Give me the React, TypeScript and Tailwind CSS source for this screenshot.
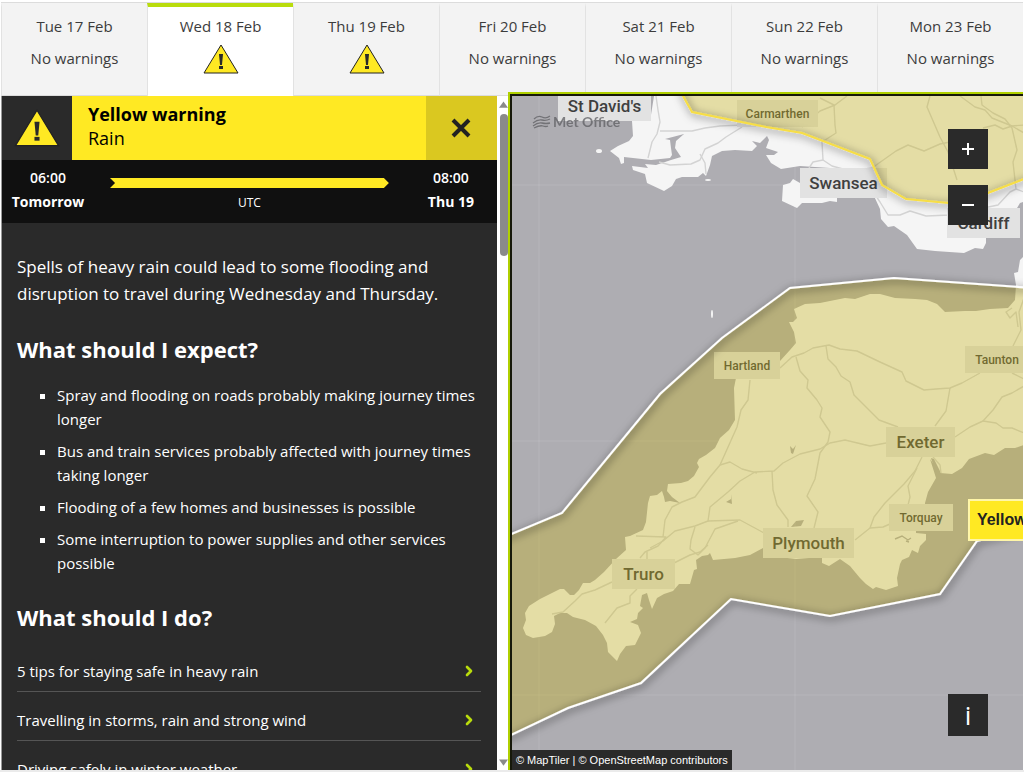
import { FiChevronRight } from 'react-icons/fi'
import clsx from 'clsx'

const DAYS = [
  { date: 'Tue 17 Feb', warning: false },
  { date: 'Wed 18 Feb', warning: true },
  { date: 'Thu 19 Feb', warning: true },
  { date: 'Fri 20 Feb', warning: false },
  { date: 'Sat 21 Feb', warning: false },
  { date: 'Sun 22 Feb', warning: false },
  { date: 'Mon 23 Feb', warning: false }
]

const EXPECT = [
  'Spray and flooding on roads probably making journey times longer',
  'Bus and train services probably affected with journey times taking longer',
  'Flooding of a few homes and businesses is possible',
  'Some interruption to power supplies and other services possible'
]

const LINKS = [
  '5 tips for staying safe in heavy rain',
  'Travelling in storms, rain and strong wind',
  'Driving safely in winter weather'
]

// x, y, width, height of the plate behind each place name
const PLACES = [
  { name: "St David's", x: 558, y: 91, w: 93, h: 30, big: true },
  { name: 'Swansea', x: 800, y: 168, w: 87, h: 30, big: true },
  { name: 'Cardiff', x: 947, y: 208, w: 73, h: 30, big: true },
  { name: 'Exeter', x: 886, y: 427, w: 69, h: 30, big: true },
  { name: 'Plymouth', x: 763, y: 528, w: 91, h: 30, big: true },
  { name: 'Truro', x: 612, y: 559, w: 63, h: 30, big: true },
  { name: 'Carmarthen', x: 737, y: 100, w: 81, h: 27, big: false },
  { name: 'Hartland', x: 714, y: 352, w: 66, h: 27, big: false },
  { name: 'Taunton', x: 965, y: 346, w: 64, h: 27, big: false },
  { name: 'Torquay', x: 889, y: 504, w: 64, h: 27, big: false }
]

const WALES =
  'M655 90 L650 121 L632 121 L633 136 L629 141 L618 146 L610 151 L619 158 L621 164 L624 163 L624 157 L651 160 L670 158 L672 155 L671 148 L670 140 L665 139 L684 134 L676 141 L675 148 L681 157 L671 160 L656 165 L645 164 L648 168 L632 166 L633 170 L645 174 L647 183 L664 191 L672 186 L676 179 L682 177 L698 177 L703 173 L706 176 L710 165 L712 156 L722 151 L735 150 L752 151 L757 146 L752 141 L760 143 L767 136 L769 140 L766 148 L778 152 L774 155 L766 155 L771 163 L781 169 L800 166 L830 168 L830 180 L800 183 L793 179 L790 183 L783 185 L782 201 L797 208 L802 203 L822 203 L830 201 L837 202 L837 190 L874 196 L880 209 L881 219 L888 227 L894 226 L907 235 L917 249 L935 251 L964 253 L975 248 L983 249 L986 243 L986 230 L1003 228 L1014 213 L1020 203 L1030 200 L1030 90 Z'

const SOUTH_WEST =
  'M738 368 L734 388 L735 420 L729 430 L720 438 L715 448 L706 455 L699 459 L697 463 L699 467 L694 476 L688 481 L681 483 L668 484 L667 491 L672 497 L680 503 L670 501 L665 502 L664 497 L662 491 L657 495 L650 496 L648 503 L646 522 L643 530 L630 536 L625 537 L626 550 L616 559 L604 572 L595 580 L590 583 L583 583 L579 590 L574 595 L570 595 L564 589 L560 589 L540 599 L529 606 L525 613 L526 620 L523 628 L526 635 L533 638 L545 636 L552 632 L555 624 L554 616 L560 613 L567 613 L573 617 L585 620 L596 626 L603 635 L607 643 L608 652 L617 661 L620 654 L626 646 L635 645 L641 633 L638 625 L630 622 L637 619 L638 613 L643 608 L640 606 L642 595 L647 593 L649 600 L652 609 L657 598 L664 594 L673 591 L679 584 L690 584 L694 570 L697 569 L696 560 L702 556 L708 555 L710 553 L713 560 L735 558 L750 555 L763 548 L770 556 L796 559 L822 557 L822 563 L829 566 L840 559 L850 566 L860 578 L866 584 L873 589 L876 587 L886 590 L898 586 L897 578 L900 564 L902 560 L909 557 L912 550 L918 553 L920 546 L926 540 L926 534 L916 533 L916 525 L925 520 L925 503 L928 492 L936 478 L930 459 L940 473 L952 474 L962 468 L969 459 L985 453 L994 455 L1005 448 L1015 448 L1030 443 L1030 250 L1020 260 L1018 272 L1014 273 L1016 285 L1015 300 L1008 308 L990 309 L976 311 L965 311 L945 312 L937 304 L927 300 L915 299 L895 298 L880 294 L870 294 L855 299 L845 298 L820 303 L805 304 L794 309 L797 318 L793 322 L789 322 L794 332 L796 343 L790 350 L780 361 L770 366 Z'

const NORTH_ZONE =
  'M670 60 L683 96 L692 112 L766 127 L802 133 L870 159 L882 185 L906 199 L948 203 L988 193 L1024 179 L1060 165 L1060 60 Z'

const SOUTH_ZONE =
  'M490 543 L562 513 L660 394 L722 338 L790 288 L894 278 L1060 290 L1060 520 L977 541 L940 594 L830 616 L731 599 L641 683 L568 708 L490 745 Z'

const ROADS = [
  'M656 96 L658 110 L660 122 L657 134 L652 142 L648 158',
  'M660 131 L683 131 L692 131 L705 128 L720 126 L742 125',
  'M742 127 L726 137 L718 143 L705 149 L700 160 L691 164 L670 165 L659 162',
  'M700 154 L705 163 L706 174',
  'M847 96 L835 105 L820 111 L802 127',
  'M820 98 L834 105 L835 125 L836 133 L822 142 L823 160 L813 162 L809 168',
  'M823 160 L832 166 L850 171 L872 168 L896 151 L908 145 L924 151 L940 144 L960 140',
  'M872 190 L880 202 L888 215 L900 215 L910 211 L926 216 L950 215 L998 205 L1010 192 L1016 189 L1024 192',
  'M930 96 L927 107 L940 137 L948 152 L957 180',
  'M960 96 L975 107 L985 110 L992 118 L1012 126 L1024 133',
  'M981 96 L982 105 L993 113 L1005 119 L1012 128 L1017 150 L1013 162 L1016 189',
  'M983 128 L995 125 L1003 129 L1012 126 L1024 125',
  'M780 368 L792 357 L804 353 L813 348 L829 345 L840 349 L857 351 L880 362 L902 372 L906 381 L924 390 L936 389 L950 388 L962 383 L980 373',
  'M950 388 L946 411 L935 426',
  'M826 346 L828 359 L836 367 L841 376 L850 382 L854 395 L862 403 L879 420 L898 427',
  'M796 357 L800 371 L808 380 L807 388 L817 400 L822 408 L820 417 L830 432 L828 442 L820 453 L815 479 L807 496 L818 512 L814 528',
  'M886 443 L870 446 L845 440 L830 443 L820 449 L800 454 L783 463 L774 471 L755 472 L740 481 L728 492 L710 507 L708 521 L695 526 L675 531 L663 541 L650 548',
  'M750 380 L748 400 L741 410 L737 427 L720 465 L710 477 L695 497 L682 502 L672 507 L665 520 L663 537',
  'M720 465 L730 462 L742 469 L757 473',
  'M708 521 L740 520 L753 527 L764 533',
  'M738 521 L715 529 L705 548 L698 555 L690 549 L691 540 L695 527',
  'M636 536 L666 537 L658 546 L645 552 L640 558',
  'M647 552 L647 560',
  'M674 563 L690 555 L700 552 L708 545',
  'M612 582 L595 590 L582 594 L575 601 L563 612 L552 614',
  'M637 589 L630 596 L630 603 L617 608 L605 623',
  'M772 471 L773 490 L777 505 L788 520 L788 527',
  'M922 457 L915 471 L904 484 L885 503 L874 517 L870 528 L855 540',
  'M917 468 L908 486 L910 497 L908 505',
  'M870 528 L883 527 L890 524',
  'M955 437 L970 427 L983 421 L993 410 L1002 397 L1012 393 L1024 386',
  'M983 421 L996 423 L1003 428 L1012 428 L1024 433',
  'M1013 346 L1021 330 L1019 312 L1024 298',
  'M1012 373 L1024 379',
  'M933 457 L940 465 L941 473',
  'M1012 308 L1006 312 L1010 318 L1016 312 L1018 327'
]

function WarningTriangle({ className }: { className: string }) {
  return (
    <svg viewBox="0 0 36 30" className={className} aria-hidden="true">
      <path d="M18 1 L35 29 H1 Z" fill="#ffe923" stroke="#222" strokeWidth="1" />
      <path d="M16 10 H20 L19 21 H17 Z" fill="#2a2a2a" />
      <rect x="16" y="22" width="4" height="3" fill="#2a2a2a" />
    </svg>
  )
}

function DayTabs() {
  return (
    <nav className="mt-0.5 grid h-[94px] shrink-0 grid-cols-7 border-t border-[#dcdcdc]">
      {DAYS.map((day, i) => (
        <button
          key={day.date}
          className={clsx(
            'flex flex-col items-center border-l border-t-4 border-l-[#e2e2e2] pt-[7px] text-[15px] text-[#3c3c3c]',
            i === 1 ? 'border-t-[#b9dc0c] bg-white' : 'border-b border-b-[#dcdcdc] border-t-[#f3f3f3] bg-[#f3f3f3]'
          )}
        >
          <span className="leading-6">{day.date}</span>
          {day.warning ? (
            <WarningTriangle className="mt-1.5 h-[30px] w-9" />
          ) : (
            <span className="mt-2 leading-6">No warnings</span>
          )}
        </button>
      ))}
    </nav>
  )
}

function WarningPanel() {
  return (
    <section className="min-w-0 flex-1 overflow-y-auto border-l border-[#999] bg-[#2a2a2a] text-white [scrollbar-width:none]">
      <header className="flex h-16 bg-[#ffe923] text-black">
        <div className="flex w-[70px] items-center justify-center bg-[#2a2a2a]">
          <WarningTriangle className="h-[38px] w-[46px]" />
        </div>
        <div className="flex-1 px-4 pt-1.5 text-lg leading-6">
          <h2 className="font-bold">Yellow warning</h2>
          <p>Rain</p>
        </div>
        <button aria-label="Close" className="flex w-[71px] items-center justify-center bg-[#dac820]">
          <svg viewBox="0 0 20 20" className="size-5">
            <path d="M2 2 L18 18 M18 2 L2 18" stroke="#222" strokeWidth="4" />
          </svg>
        </button>
      </header>

      <div className="flex h-[63px] bg-[#101010] pt-1.5 text-center text-sm leading-6">
        <div className="w-[92px]">
          <p className="font-semibold">06:00</p>
          <p className="font-bold">Tomorrow</p>
        </div>
        <div className="flex-1 px-4">
          <svg viewBox="0 0 278 10" preserveAspectRatio="none" className="mt-3 h-2.5 w-full">
            <path d="M0 0 H273 L278 5 L273 10 H0 L5 5 Z" fill="#ffe923" />
          </svg>
          <p className="mt-[3px] text-xs leading-6">UTC</p>
        </div>
        <div className="w-[92px]">
          <p className="font-semibold">08:00</p>
          <p className="font-bold">Thu 19</p>
        </div>
      </div>

      <div className="pl-[15px] pr-4 pt-[30px]">
        <p className="text-[17px] leading-[27px]">
          Spells of heavy rain could lead to some flooding and disruption to travel during Wednesday and Thursday.
        </p>
        <h3 className="mt-7 text-[22px] font-bold leading-7">What should I expect?</h3>
        <ul className="mt-5 list-[square] space-y-2 pl-10 text-[15px] leading-6">
          {EXPECT.map((item) => (
            <li key={item}>{item}</li>
          ))}
        </ul>
        <h3 className="mt-7 text-[22px] font-bold leading-7">What should I do?</h3>
        <div className="mt-3">
          {LINKS.map((link) => (
            <a
              key={link}
              href="#"
              className="flex h-[49px] items-center justify-between border-b border-[#555] pr-1 pt-2 text-[15px]"
            >
              {link}
              <FiChevronRight className="size-4 text-[#b9dc0c]" strokeWidth={4} />
            </a>
          ))}
        </div>
      </div>
    </section>
  )
}

function ScrollRail() {
  return (
    <div className="flex w-[11px] shrink-0 flex-col items-end bg-white pl-0.5" aria-hidden="true">
      <svg viewBox="0 0 10 18" className="h-[18px] w-[9px]">
        <path d="M5 5 L10 12 H0 Z" fill="#8a8a8a" />
      </svg>
      <div className="h-[142px] w-2 rounded-full bg-[#8a8a8a]" />
      <svg viewBox="0 0 10 14" className="mt-auto h-3.5 w-[9px]">
        <path d="M5 10 L10 3 H0 Z" fill="#8a8a8a" />
      </svg>
    </div>
  )
}

function MapDrawing() {
  return (
    <svg viewBox="512 96 512 674" preserveAspectRatio="xMinYMin slice" className="block size-full font-['Roboto',sans-serif]">
      <defs>
        <filter id="shadow" x="-10%" y="-10%" width="120%" height="120%">
          <feDropShadow dx="1" dy="2" stdDeviation="4" floodColor="#000" floodOpacity="0.8" />
        </filter>
      </defs>
      <rect x="512" y="96" width="1024" height="1348" fill="#aeadb2" />

      <g fill="#f5f5f5">
        <path d={WALES} />
        <path d={SOUTH_WEST} />
        <ellipse cx="599" cy="151" rx="3" ry="2" />
        <ellipse cx="708" cy="180" rx="3" ry="1" />
        <ellipse cx="712" cy="314" rx="1" ry="4" />
      </g>
      <g fill="#aeadb2">
        <path d="M726 502 L731 499 L731 494 L732 504 Z" />
        <path d="M790 446 L793 449 L796 445 L793 454 L791 453 Z" />
        <path d="M791 527 L796 521 L804 520 L801 526 Z" />
        <path d="M931 458 L934 459 L941 473 L937 477 Z" />
      </g>
      <path d="M895 539 L902 536 L908 540 L911 538 M906 541 L909 542" fill="none" stroke="#aeadb2" strokeWidth="1.4" />
      <g fill="none" stroke="#d3d3d3" strokeWidth="1.4" strokeLinejoin="round">
        {ROADS.map((d) => (
          <path key={d} d={d} />
        ))}
      </g>
      <path d="M539 96 V770 M795 96 V770 M512 185 H1024 M512 441 H1024 M512 695 H1024" stroke="#fff" strokeOpacity="0.12" />

      {PLACES.map((p) => (
        <g key={p.name}>
          <rect x={p.x} y={p.y} width={p.w} height={p.h} fill="#e2e2e2" />
          <text
            x={p.x + p.w / 2}
            y={p.big ? p.y + 21 : p.y + 18}
            textAnchor="middle"
            fill="#3f3f3f"
            fontSize={p.big ? 17 : 12}
            fontWeight="500"
          >
            {p.name}
          </text>
        </g>
      ))}

      <path d={NORTH_ZONE} fill="#c8b519" fillOpacity="0.36" />
      <path d={NORTH_ZONE} fill="none" stroke="#f7de45" strokeWidth="2" filter="url(#shadow)" />
      <path d={SOUTH_ZONE} fill="#c8b519" fillOpacity="0.36" />
      <path d={SOUTH_ZONE} fill="none" stroke="#fff" strokeWidth="2" filter="url(#shadow)" />

      <g opacity="0.75">
        <path
          d="M534 119 Q538 115 542 117 T550 116 M533 123 Q538 119 542 120 T550 119 M533 126 Q538 122 542 123 T550 123 M534 128 Q540 125 543 126 T548 126"
          fill="none"
          stroke="#5f5f63"
          strokeWidth="1.3"
        />
        <text x="553" y="127" fontFamily="Lato" fontSize="14" fontWeight="700" fill="#5f5f63">
          Met Office
        </text>
      </g>
    </svg>
  )
}

function WarningMap() {
  const control = 'flex w-10 items-center justify-center bg-[#2a2a2a] text-white'
  return (
    <section className="relative -mt-1 min-w-0 flex-1 border-l-2 border-t-2 border-[#b0d000]">
      <div className="h-full border-l-2 border-t-2 border-[#16180a]">
        <div className="relative h-full overflow-hidden">
          {/* keeps the drawing from giving the row its height */}
          <div className="absolute inset-0">
            <MapDrawing />
          </div>
          <div className="absolute left-[456px] top-[403px] border-2 border-[#fff6a8] bg-[#ffe923] py-[7px] pl-[7px] pr-4 font-['Liberation_Sans',sans-serif] text-base font-bold leading-6 text-[#222]">
            Yellow
          </div>
          <div className="absolute right-[35px] top-[33px] flex flex-col gap-4">
            <button aria-label="Zoom in" className={`${control} h-10`}>
              <svg viewBox="0 0 14 14" className="size-3.5">
                <path d="M7 1 V13 M1 7 H13" stroke="#fff" strokeWidth="2" />
              </svg>
            </button>
            <button aria-label="Zoom out" className={`${control} h-10`}>
              <svg viewBox="0 0 14 14" className="size-3.5">
                <path d="M1 7 H13" stroke="#fff" strokeWidth="2" />
              </svg>
            </button>
          </div>
          <button className={`${control} absolute bottom-[34px] right-[35px] h-[42px] text-[26px]`}>i</button>
          <p className="absolute bottom-0 left-0 bg-[#2a2a2a] px-1 font-['Liberation_Sans',sans-serif] text-[11px] leading-5 text-white">
            <a href="#">© MapTiler</a> | <a href="#">© OpenStreetMap contributors</a>
          </p>
        </div>
      </div>
    </section>
  )
}

export default function App() {
  return (
    <div className="flex h-screen flex-col overflow-hidden border-b-2 border-[#ebebeb] bg-white px-px font-['Open_Sans',sans-serif]">
      <DayTabs />
      <main className="flex min-h-0 flex-1">
        <div className="flex w-[49.6%]">
          <WarningPanel />
          <ScrollRail />
        </div>
        <WarningMap />
      </main>
    </div>
  )
}
